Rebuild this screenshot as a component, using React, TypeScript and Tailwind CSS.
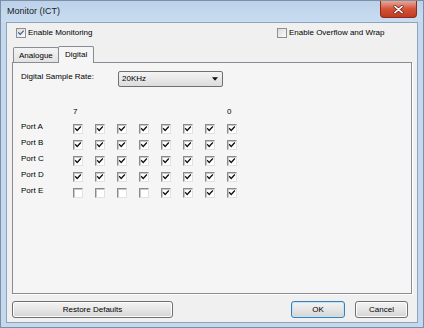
import React from 'react'

const font = "font-['Liberation_Sans',Arial,sans-serif]"

const Tick = ({ color, width = 1.5 }: { color: string; width?: number }) => (
  <svg viewBox="0 0 10 10" className="w-full h-full">
    <path d="M2 4.6 L4 6.8 L8 2.4" fill="none" stroke={color} strokeWidth={width} strokeLinecap="square" />
  </svg>
)

// aero style checkbox (top options)
const AeroCheck = ({ checked }: { checked: boolean }) => (
  <div className="w-[10px] h-[10px] border border-[#8e8f8f] bg-gradient-to-br from-[#dcdcdc] to-[#fbfbfb] p-[0px]">
    {checked && <Tick color="#3a5a9b" width={1.4} />}
  </div>
)

// classic sunken checkbox (port grid)
const CellCheck = ({ checked }: { checked: boolean }) => (
  <div className="w-[10px] h-[10px] bg-white border border-t-[#8a8a8a] border-l-[#8a8a8a] border-b-[#e2e2e2] border-r-[#e2e2e2] shadow-[inset_1px_1px_0_#c8c8c8]">
    {checked && <Tick color="#111" width={1.6} />}
  </div>
)

const ports: [string, boolean[]][] = [
  ['Port A', [true, true, true, true, true, true, true, true]],
  ['Port B', [true, true, true, true, true, true, true, true]],
  ['Port C', [true, true, true, true, true, true, true, true]],
  ['Port D', [true, true, true, true, true, true, true, true]],
  ['Port E', [false, false, false, false, true, true, true, true]],
]

const WinButton = ({ label, w, primary }: { label: string; w: string; primary?: boolean }) => (
  <button
    className={`${w} h-[17px] rounded-[3px] border text-[8px] text-black leading-none bg-gradient-to-b from-[#f3f3f3] via-[#e6e6e6] to-[#d4d4d4] ${
      primary ? 'border-[#3c7fb1] shadow-[inset_0_0_0_1px_#bfe6f8]' : 'border-[#707070] shadow-[inset_0_0_0_1px_#fcfcfc]'
    }`}
  >
    {label}
  </button>
)

export default function App() {
  return (
    <div className={`${font} w-[424px] h-[328px] flex flex-col bg-[#c4d8ee] border border-[#7b8fa6] text-black`}>
      {/* title bar */}
      <div className="h-[21px] flex items-start justify-between pl-[6px] pr-[6px] bg-gradient-to-b from-[#bcd2ea] to-[#c9dcf1]">
        <span className="text-[9px] mt-[6px] leading-none text-[#1b1b1b]">Monitor (ICT)</span>
        <button className="w-[37px] h-[17px] rounded-b-[4px] border border-t-0 border-[#8b2a1c] bg-gradient-to-b from-[#e8a697] via-[#d3523a] to-[#c23a1f] flex items-center justify-center">
          <svg viewBox="0 0 12 10" className="w-[11px] h-[9px]">
            <path d="M2 1.5 L10 8.5 M10 1.5 L2 8.5" stroke="#5a1a10" strokeWidth="3.2" strokeLinecap="round" />
            <path d="M2 1.5 L10 8.5 M10 1.5 L2 8.5" stroke="#fff" strokeWidth="1.8" strokeLinecap="round" />
          </svg>
        </button>
      </div>

      {/* client area */}
      <div className="flex-1 mx-[5px] mb-[4px] border border-[#8fa4bb] bg-[#f0f0f0] flex flex-col">
        <div className="flex items-center h-[10px] mt-[5px] pl-[9px] text-[8px] leading-none">
          <div className="w-[261px] flex items-center gap-[2px]">
            <AeroCheck checked />
            <span>Enable Monitoring</span>
          </div>
          <div className="flex items-center gap-[2px]">
            <AeroCheck checked={false} />
            <span>Enable Overflow and Wrap</span>
          </div>
        </div>

        {/* tabs */}
        <div className="flex items-end h-[17px] mt-[7px] pl-[6px] text-[8px] leading-none">
          <div className="w-[46px] h-[15px] border border-b-0 border-[#898c95] rounded-t-[2px] bg-gradient-to-b from-[#f3f3f3] to-[#e3e3e3] pl-[5px] pt-[4px]">
            Analogue
          </div>
          <div className="w-[36px] h-[17px] -ml-px -mb-px relative z-10 border border-b-0 border-[#898c95] rounded-t-[2px] bg-[#f5f5f5] pl-[6px] pt-[4px]">
            Digital
          </div>
        </div>

        {/* panel */}
        <div className="flex-1 mx-[5px] border border-[#898c95] shadow-[1px_1px_0_#fff] bg-[#f5f5f5] flex flex-col text-[8px] leading-none">
          <div className="flex items-center h-[16px] mt-[8px] pl-[8px]">
            <span className="w-[97px] pb-[4px]">Digital Sample Rate:</span>
            <div className="w-[105px] h-[16px] rounded-[2px] border border-[#707070] bg-gradient-to-b from-[#f4f4f4] to-[#dcdcdc] flex items-center justify-between pl-[3px] pr-[4px]">
              <span>20KHz</span>
              <svg viewBox="0 0 7 4" className="w-[6px] h-[4px]">
                <path d="M0 0 L7 0 L3.5 4 Z" fill="#111" />
              </svg>
            </div>
          </div>

          <div className="flex h-[10px] mt-[21px] pl-[8px]">
            <div className="w-[52px]" />
            {Array.from({ length: 8 }).map((_, i) => (
              <div key={i} className="w-[22px]">
                {i === 0 ? '7' : i === 7 ? '0' : ''}
              </div>
            ))}
          </div>

          <div className="flex flex-col mt-[3px] pl-[8px]">
            {ports.map(([name, bits]) => (
              <div key={name} className="flex items-center h-[16px]">
                <span className="w-[52px] pb-[4px]">{name}</span>
                {bits.map((b, i) => (
                  <div key={i} className="w-[22px]">
                    <CellCheck checked={b} />
                  </div>
                ))}
              </div>
            ))}
          </div>
        </div>

        {/* buttons */}
        <div className="flex items-center justify-between h-[17px] mt-[7px] mb-[4px] pl-[5px] pr-[9px]">
          <WinButton label="Restore Defaults" w="w-[161px]" />
          <div className="flex gap-[10px]">
            <WinButton label="OK" w="w-[54px]" primary />
            <WinButton label="Cancel" w="w-[53px]" />
          </div>
        </div>
      </div>
    </div>
  )
}
